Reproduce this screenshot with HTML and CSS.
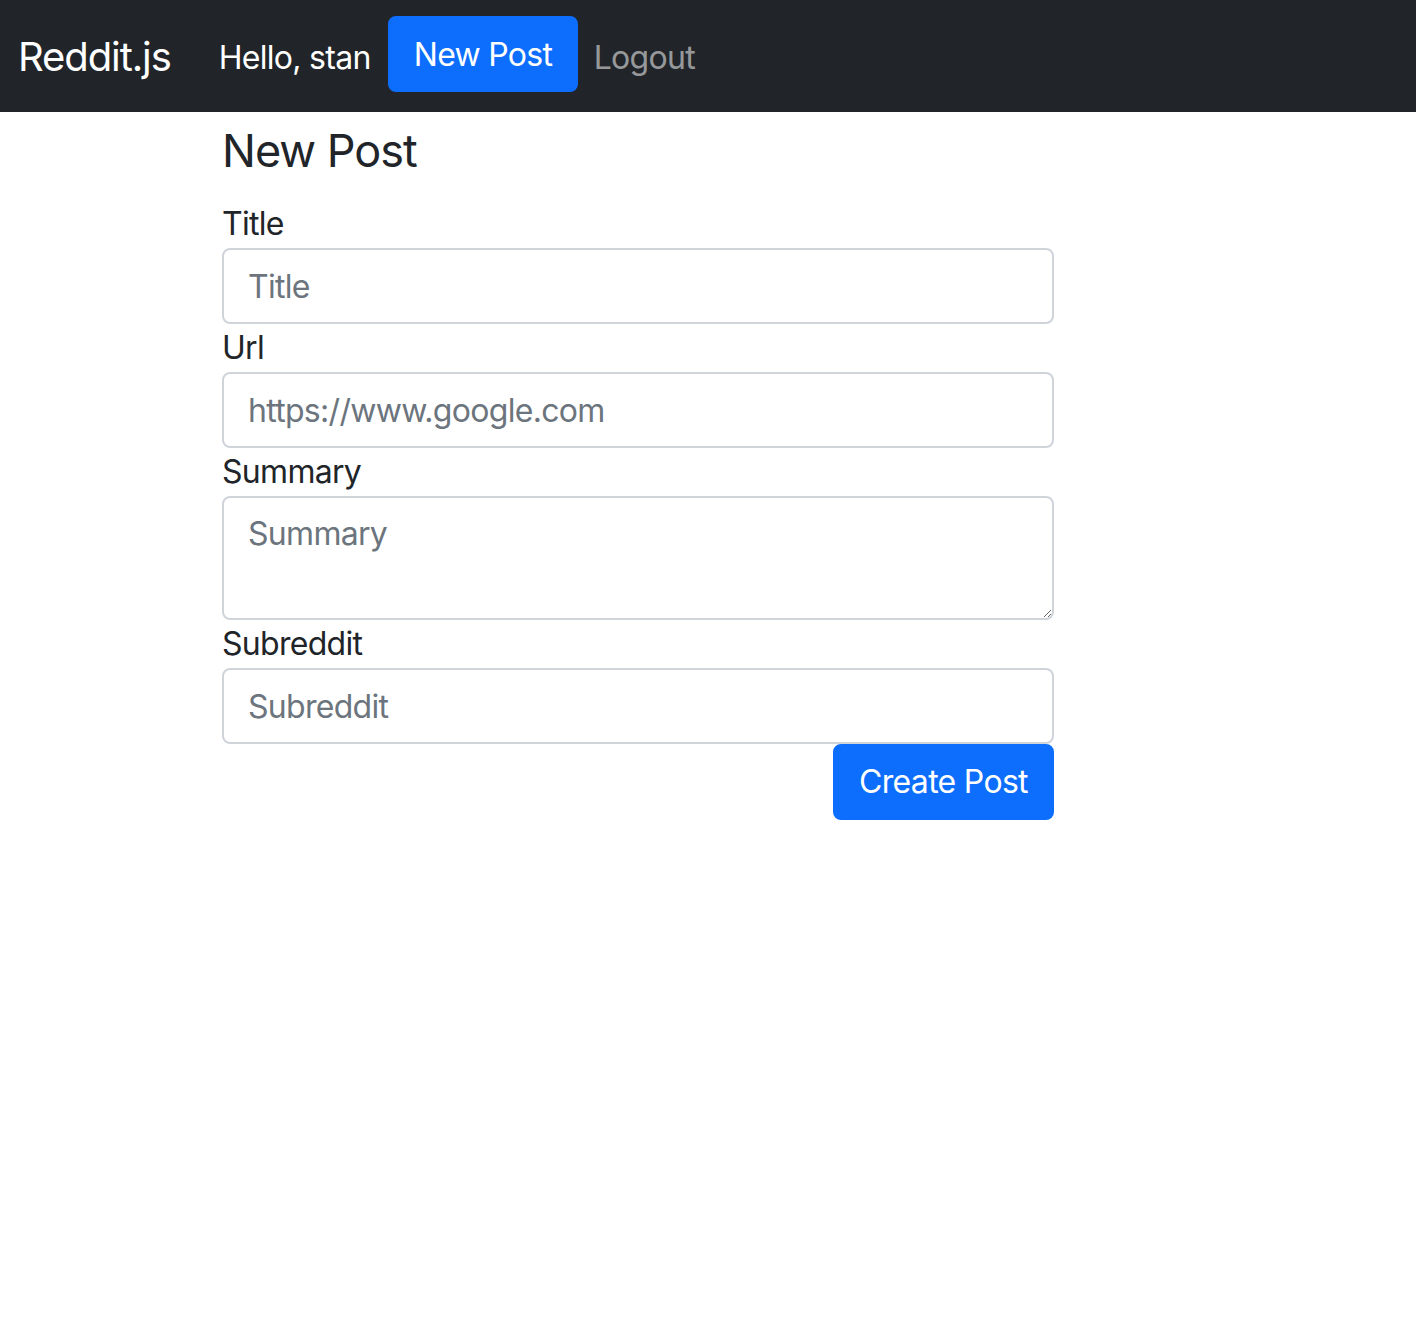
FILE: index.html
```html
<!DOCTYPE html>
<html lang="en">
<head>
<meta charset="utf-8">
<title>Reddit.js</title>
<link rel="stylesheet" href="styles.css">
</head>
<body>
<nav class="navbar">
  <a class="brand" href="#">Reddit.js</a>
  <ul class="nav">
    <li><span class="nav-text">Hello, stan</span></li>
    <li><a class="btn btn-primary nav-btn" href="#">New Post</a></li>
    <li><a class="nav-link" href="#">Logout</a></li>
  </ul>
</nav>
<main class="content">
  <h1 class="page-title">New Post</h1>
  <form class="post-form">
    <label class="form-label" for="title">Title</label>
    <input class="form-control" id="title" type="text" placeholder="Title">
    <label class="form-label" for="url">Url</label>
    <input class="form-control" id="url" type="text" placeholder="https://www.google.com">
    <label class="form-label" for="summary">Summary</label>
    <textarea class="form-control textarea" id="summary" placeholder="Summary"></textarea>
    <label class="form-label" for="subreddit">Subreddit</label>
    <input class="form-control" id="subreddit" type="text" placeholder="Subreddit">
    <div class="actions">
      <button class="btn btn-primary submit" type="submit">Create Post</button>
    </div>
  </form>
</main>
</body>
</html>
```
FILE: styles.css
```css
* { box-sizing: border-box; }
html, body { margin: 0; padding: 0; }
body {
  font-family: Inter, "Noto Sans", "Liberation Sans", sans-serif;
  color: #212529;
  background: #fff;
  font-size: 32px;
  line-height: 1.5;
  letter-spacing: -0.7px;
}
.navbar {
  background: #212529;
  height: 112px;
  display: flex;
  align-items: center;
  padding: 0 18px;
}
.brand {
  color: #fff;
  text-decoration: none;
  font-size: 40px;
  line-height: 60px;
  margin-right: 48px;
  letter-spacing: -1.1px;
  padding-top: 2px;
}
.nav {
  list-style: none;
  margin: 0;
  padding: 0;
  display: flex;
  align-items: center;
}
.nav-text {
  color: #fff;
  display: block;
  padding: 3px 17px 0 0;
}
.nav-link {
  color: rgba(255, 255, 255, 0.55);
  text-decoration: none;
  display: block;
  padding: 3px 16px 0 16px;
}
.btn {
  display: inline-block;
  font-family: inherit;
  font-size: 32px;
  line-height: 48px;
  letter-spacing: -0.7px;
  border: 2px solid #0d6efd;
  border-radius: 8px;
  text-decoration: none;
  cursor: pointer;
  white-space: nowrap;
  text-align: center;
}
.btn-primary {
  background: #0d6efd;
  color: #fff;
}
.nav-btn {
  padding: 13px 24px 11px;
  height: 76px;
  width: 190px;
  margin-top: -4px;
}
.content {
  margin-left: 222px;
  width: 832px;
}
.page-title {
  font-weight: 400;
  font-size: 45px;
  line-height: 54px;
  margin: 12px 0 22px;
  letter-spacing: -1px;
}
.post-form {
  display: flex;
  flex-direction: column;
}
.form-label {
  display: block;
  line-height: 48px;
}
.form-control {
  display: block;
  width: 100%;
  height: 76px;
  padding: 12px 24px;
  font-family: inherit;
  font-size: 32px;
  line-height: 48px;
  letter-spacing: -0.7px;
  color: #212529;
  border: 2px solid #ced4da;
  border-radius: 8px;
  background: #fff;
}
.form-control::placeholder { color: #6c757d; opacity: 1; }
.textarea {
  height: 124px;
  resize: vertical;
}
.actions {
  display: flex;
  justify-content: flex-end;
}
.submit {
  padding: 12px 0;
  height: 76px;
  width: 221px;
}
```
